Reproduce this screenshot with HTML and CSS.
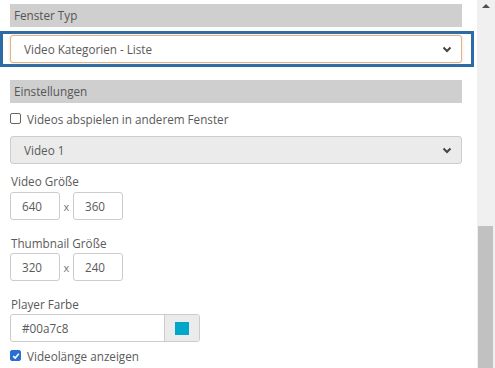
FILE: index.html
```html
<!DOCTYPE html>
<html lang="de">
<head>
  <meta charset="UTF-8" />
  <meta name="viewport" content="width=device-width, initial-scale=1.0" />
  <title>Fenster Einstellungen</title>
  <link rel="stylesheet" href="styles.css">
</head>
<body>
  <div class="window">
    <div class="panel">
      <div class="section-head">Fenster Typ</div>

      <div class="highlight">
        <div class="select focused">
          <span>Video Kategorien - Liste</span>
          <svg class="chevron" width="10" height="7" viewBox="0 0 10 7"><path d="M1.5 1.5 L5 5 L8.5 1.5" fill="none" stroke="#444" stroke-width="2"/></svg>
        </div>
      </div>

      <div class="section-head second">Einstellungen</div>

      <label class="check-row">
        <span class="box"></span>
        <span>Videos abspielen in anderem Fenster</span>
      </label>

      <div class="select disabled">
        <span>Video 1</span>
        <svg class="chevron" width="10" height="7" viewBox="0 0 10 7"><path d="M1.5 1.5 L5 5 L8.5 1.5" fill="none" stroke="#444" stroke-width="2"/></svg>
      </div>

      <div class="field first">
        <div class="field-label">Video Größe</div>
        <div class="size-row">
          <div class="num-input">640</div>
          <span class="times">x</span>
          <div class="num-input">360</div>
        </div>
      </div>

      <div class="field">
        <div class="field-label">Thumbnail Größe</div>
        <div class="size-row">
          <div class="num-input">320</div>
          <span class="times">x</span>
          <div class="num-input">240</div>
        </div>
      </div>

      <div class="field">
        <div class="field-label">Player Farbe</div>
        <div class="color-input">
          <div class="color-text">#00a7c8</div>
          <div class="color-addon"><span class="swatch"></span></div>
        </div>
      </div>

      <label class="check-row last">
        <span class="box checked">
          <svg width="8" height="8" viewBox="0 0 8 8"><path d="M1.2 4.2 L3.2 6 L6.8 1.8" fill="none" stroke="#fff" stroke-width="1.6"/></svg>
        </span>
        <span>Videolänge anzeigen</span>
      </label>
    </div>

    <div class="scrollbar">
      <div class="arrow-up"></div>
      <div class="thumb"></div>
    </div>
  </div>
</body>
</html>
```

FILE: styles.css
```css
body {
  margin: 0;
  font-family: 'Open Sans', sans-serif;
  font-size: 11.7px;
  color: #5a5a5a;
  background: #fff;
  overflow: hidden;
}

.window {
  display: flex;
  height: 368px;
}

.panel {
  flex: 1;
  padding-top: 4px;
}

.section-head {
  height: 23px;
  line-height: 23px;
  margin: 0 15px 0 10px;
  padding-left: 4px;
  background: #cfcfcf;
  color: #555;
}

.section-head.second {
  margin-top: 13px;
}

/* blauer rahmen um das erste feld */
.highlight {
  margin: 4px 3px 0 0;
  padding: 1px 9px 1px 7px;
  border: 3px solid #2b6ca6;
}

.select {
  height: 28px;
  box-sizing: border-box;
  border: 1px solid #ccc;
  border-radius: 3px;
  padding: 0 9px 0 13px;
  display: flex;
  align-items: center;
  justify-content: space-between;
}

.select.focused {
  border-color: #dcb48c;
  box-shadow: 0 0 3px rgba(236, 170, 110, 0.45);
  background: #fff;
}

.select.disabled {
  margin: 10px 15px 0 10px;
  background: #ebebeb;
}

.chevron {
  display: block;
}

.check-row {
  display: flex;
  align-items: center;
  gap: 6px;
  margin: 8px 0 0 10px;
  height: 15px;
}

.check-row.last {
  margin-top: 6px;
}

.box {
  width: 9px;
  height: 9px;
  border: 1px solid #666;
  border-radius: 2px;
  display: flex;
  align-items: center;
  justify-content: center;
}

.box.checked {
  background: #2a6fd0;
  border-color: #2a6fd0;
}

.field {
  margin: 15px 0 0 10px;
}

.field.first {
  margin-top: 9px;
}

.field-label {
  height: 16px;
  line-height: 16px;
  margin-left: 1px;
  margin-bottom: 2px;
}

.field.first .field-label {
  margin-bottom: 3px;
}

.size-row {
  display: flex;
  align-items: center;
}

.num-input {
  width: 50px;
  height: 28px;
  box-sizing: border-box;
  border: 1px solid #ccc;
  border-radius: 3px;
  padding-left: 11px;
  line-height: 26px;
}

.times {
  width: 13px;
  text-align: center;
  font-size: 11px;
  color: #777;
}

.color-input {
  display: flex;
  width: 190px;
  height: 28px;
  box-sizing: border-box;
  border: 1px solid #ccc;
  border-radius: 3px;
  overflow: hidden;
}

.color-text {
  flex: 1;
  padding-left: 11px;
  line-height: 26px;
}

.color-addon {
  width: 34px;
  background: #ebebeb;
  border-left: 1px solid #ccc;
  display: flex;
  align-items: center;
  justify-content: center;
}

.swatch {
  width: 14px;
  height: 13px;
  background: #00a7c8;
}

.scrollbar {
  width: 18px;
  background: #f0f0f0;
  position: relative;
}

.arrow-up {
  margin: 4px auto 0;
  width: 0;
  height: 0;
  border-left: 4px solid transparent;
  border-right: 4px solid transparent;
  border-bottom: 4px solid #505050;
}

.thumb {
  position: absolute;
  left: 1px;
  right: 2px;
  top: 226px;
  bottom: 0;
  background: #c1c1c1;
}
```
